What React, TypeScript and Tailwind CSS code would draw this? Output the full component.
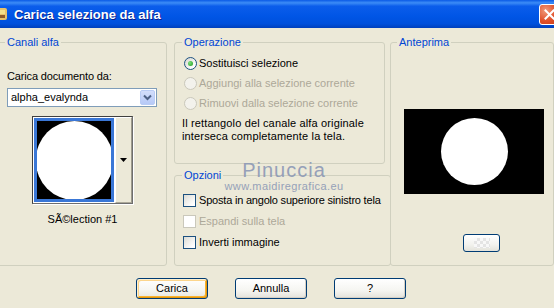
import React from "react";

function Radio({ checked = false, disabled = false }: { checked?: boolean; disabled?: boolean }) {
  return (
    <span
      className={
        disabled
          ? "flex h-[13px] w-[13px] shrink-0 items-center justify-center rounded-full border border-[#CAC8BB] bg-[#F3F2EC]"
          : "flex h-[13px] w-[13px] shrink-0 items-center justify-center rounded-full border border-[#1C5180] bg-[linear-gradient(135deg,#D6D5CE,#FFFFFF_80%)]"
      }
    >
      {checked && <span className="h-[5px] w-[5px] rounded-full bg-[radial-gradient(circle_at_35%_35%,#7BE07B,#1E9A1E)]" />}
    </span>
  );
}

function Check({ disabled = false }: { disabled?: boolean }) {
  return (
    <span
      className={
        disabled
          ? "block h-[13px] w-[13px] shrink-0 border border-[#CAC8BB] bg-white"
          : "block h-[13px] w-[13px] shrink-0 border border-[#1C5180] bg-[linear-gradient(135deg,#DCDCD5,#FFFFFF_85%)]"
      }
    />
  );
}

function XPButton({ children, def = false }: { children: React.ReactNode; def?: boolean }) {
  return (
    <div
      className={
        def
          ? "flex h-[21px] w-[72px] items-center justify-center rounded-[3px] border border-[#003C74] bg-[linear-gradient(to_bottom,#FFFFFF,#F5F5F1_60%,#E6E5DE)] text-[11px] text-black shadow-[inset_1px_1px_0_#FFF0CF,inset_-1px_-1px_0_#E5970E,inset_2px_2px_0_#FCD58C,inset_-2px_-2px_0_#F8B330]"
          : "flex h-[21px] w-[72px] items-center justify-center rounded-[3px] border border-[#003C74] bg-[linear-gradient(to_bottom,#FFFFFF,#F5F5F1_60%,#E3E2DA)] text-[11px] text-black shadow-[inset_-1px_-1px_0_#D6D0C5]"
      }
    >
      {children}
    </div>
  );
}

export default function App() {
  return (
    <div className="relative flex h-[308px] w-[554px] flex-col overflow-hidden bg-[#ECE9D8] font-['Liberation_Sans',Arial,sans-serif] text-[11px] leading-[13px] text-black">
      {/* Title bar */}
      <div className="flex h-[28px] shrink-0 items-center bg-[linear-gradient(to_bottom,#0A5AE6_0%,#3C8CF6_10%,#0B5DEB_22%,#0055E5_60%,#0050DC_85%,#0040BC_100%)]">
        <svg width="16" height="16" viewBox="0 0 16 16" className="ml-[-8px] shrink-0">
          <rect x="1" y="2" width="14" height="12" rx="2" fill="#E8C26A" />
          <rect x="3" y="4" width="4" height="4" fill="#D9381E" />
          <rect x="8" y="4" width="5" height="4" fill="#F5E08A" />
          <rect x="3" y="9" width="4" height="3" fill="#3D7BD8" />
          <rect x="8" y="9" width="5" height="3" fill="#8E5A2B" />
        </svg>
        <span className="ml-[6px] text-[13px] font-bold text-white [text-shadow:1px_1px_0_#0A1E8C]">
          Carica selezione da alfa
        </span>
        <div className="ml-auto mr-[-6px] flex h-[21px] w-[21px] items-center justify-center rounded-[3px] border border-white bg-[radial-gradient(circle_at_30%_30%,#F09A7A,#E0502A_55%,#C53A18)]">
          <svg width="11" height="11" viewBox="0 0 11 11">
            <path d="M1.5 1.5 L9.5 9.5 M9.5 1.5 L1.5 9.5" stroke="white" strokeWidth="2" strokeLinecap="square" />
          </svg>
        </div>
      </div>

      {/* Groups */}
      <div className="ml-[-3px] mt-[8px] flex h-[230px] shrink-0">
        {/* Canali alfa */}
        <fieldset className="h-[230px] w-[168px] shrink-0 rounded-[3px] border border-[#D0D0BF] px-[9px]">
          <legend className="ml-[-2px] px-[2px] text-[#0046D5]">Canali alfa</legend>
          <div className="mt-[21px] whitespace-nowrap tracking-[-0.15px]">Carica documento da:</div>
          <div className="mt-[5px] flex h-[19px] w-[150px] items-center border border-[#7F9DB9] bg-white">
            <span className="pl-[3px]">alpha_evalynda</span>
            <span className="ml-auto mr-px flex h-[15px] w-[15px] items-center justify-center rounded-[2px] border border-[#B9CCF5] bg-[linear-gradient(to_bottom,#D3DEFB,#B6C9F7)]">
              <svg width="9" height="7" viewBox="0 0 9 7">
                <path d="M1 1.5 L4.5 5 L8 1.5" stroke="#4D6185" strokeWidth="2" fill="none" />
              </svg>
            </span>
          </div>
          <div className="ml-[25px] mt-[9px] flex w-[101px] flex-col items-center">
            <div className="flex h-[88px] w-[101px] border border-[#404040] border-b-[#6E6E6E] border-r-[#6E6E6E] bg-white shadow-[1px_1px_0_#FFFFFF]">
              <div className="m-[1px] flex h-[84px] w-[81px] items-center justify-center overflow-hidden border-[3px] border-[#3A77D6] bg-black">
                <div className="h-[79px] w-[77px] shrink-0 rounded-full bg-white" />
              </div>
              <div className="flex h-full w-[17px] items-center justify-center border border-[#FFFFFF] border-b-[#ACA899] border-r-[#9D9A8C] bg-[#ECE9D8]">
                <svg width="7" height="4" viewBox="0 0 7 4">
                  <path d="M0 0 H7 L3.5 4 Z" fill="black" />
                </svg>
              </div>
            </div>
            <div className="mt-[9px] whitespace-nowrap">SÃ©lection #1</div>
          </div>
        </fieldset>

        {/* Middle column */}
        <div className="ml-[7px] flex w-[211px] shrink-0 flex-col gap-[5px]">
          <fieldset className="h-[128px] w-[211px] rounded-[3px] border border-[#D0D0BF] px-[9px]">
            <legend className="ml-[-2px] px-[2px] text-[#0046D5]">Operazione</legend>
            <div className="mt-[4px] flex h-[20px] items-center gap-[2px] whitespace-nowrap">
              <Radio checked />
              <span>Sostituisci selezione</span>
            </div>
            <div className="flex h-[20px] items-center gap-[2px] whitespace-nowrap text-[#ACA899]">
              <Radio disabled />
              <span>Aggiungi alla selezione corrente</span>
            </div>
            <div className="flex h-[20px] items-center gap-[2px] whitespace-nowrap text-[#ACA899]">
              <Radio disabled />
              <span>Rimuovi dalla selezione corrente</span>
            </div>
            <div className="ml-[-2px] mt-[4px] whitespace-nowrap tracking-[0.15px]">
              Il rettangolo del canale alfa originale
              <br />
              interseca completamente la tela.
            </div>
          </fieldset>
          <fieldset className="h-[97px] w-[211px] rounded-[3px] border border-[#D0D0BF] px-[9px]">
            <legend className="ml-[-2px] px-[2px] text-[#0046D5]">Opzioni</legend>
            <div className="ml-[-1px] mt-[8px] flex h-[21px] items-center gap-[3px] whitespace-nowrap">
              <Check />
              <span className="tracking-[-0.2px]">Sposta in angolo superiore sinistro tela</span>
            </div>
            <div className="ml-[-1px] flex h-[21px] items-center gap-[3px] whitespace-nowrap text-[#ACA899]">
              <Check disabled />
              <span>Espandi sulla tela</span>
            </div>
            <div className="ml-[-1px] flex h-[21px] items-center gap-[3px] whitespace-nowrap">
              <Check />
              <span>Inverti immagine</span>
            </div>
          </fieldset>
        </div>

        {/* Anteprima */}
        <fieldset className="ml-[5px] h-[230px] w-[163px] shrink-0 rounded-[3px] border border-[#D0D0BF] px-[9px]">
          <legend className="ml-[-3px] px-[2px] text-[#0046D5]">Anteprima</legend>
          <div className="ml-[4px] mt-[60px] flex h-[85px] w-[140px] items-center justify-center bg-black">
            <div className="h-[67px] w-[67px] rounded-full bg-white" />
          </div>
          <div className="ml-[63px] mt-[40px] flex h-[18px] w-[37px] items-center justify-center rounded-[3px] border border-[#003C74] bg-[linear-gradient(to_bottom,#FFFFFF,#F2F2EE_60%,#E3E2DA)]">
            <div className="h-[10px] w-[16px] bg-[repeating-conic-gradient(#E4E4E4_0%_25%,#F8F8F8_0%_50%)] bg-[length:6px_6px]" />
          </div>
        </fieldset>
      </div>

      {/* Buttons */}
      <div className="mt-[12px] flex gap-[27px] pl-[136px]">
        <XPButton def>Carica</XPButton>
        <XPButton>Annulla</XPButton>
        <XPButton>?</XPButton>
      </div>

      {/* Watermark */}
      <div className="pointer-events-none absolute left-[222px] top-[159px] flex w-[124px] flex-col items-center text-[#8D99B6]">
        <span className="block text-[20px] leading-[22px] tracking-[1px] opacity-90">Pinuccia</span>
        <span className="block text-[11px] leading-[11px] tracking-[0.4px] opacity-90">www.maidiregrafica.eu</span>
      </div>
    </div>
  );
}
